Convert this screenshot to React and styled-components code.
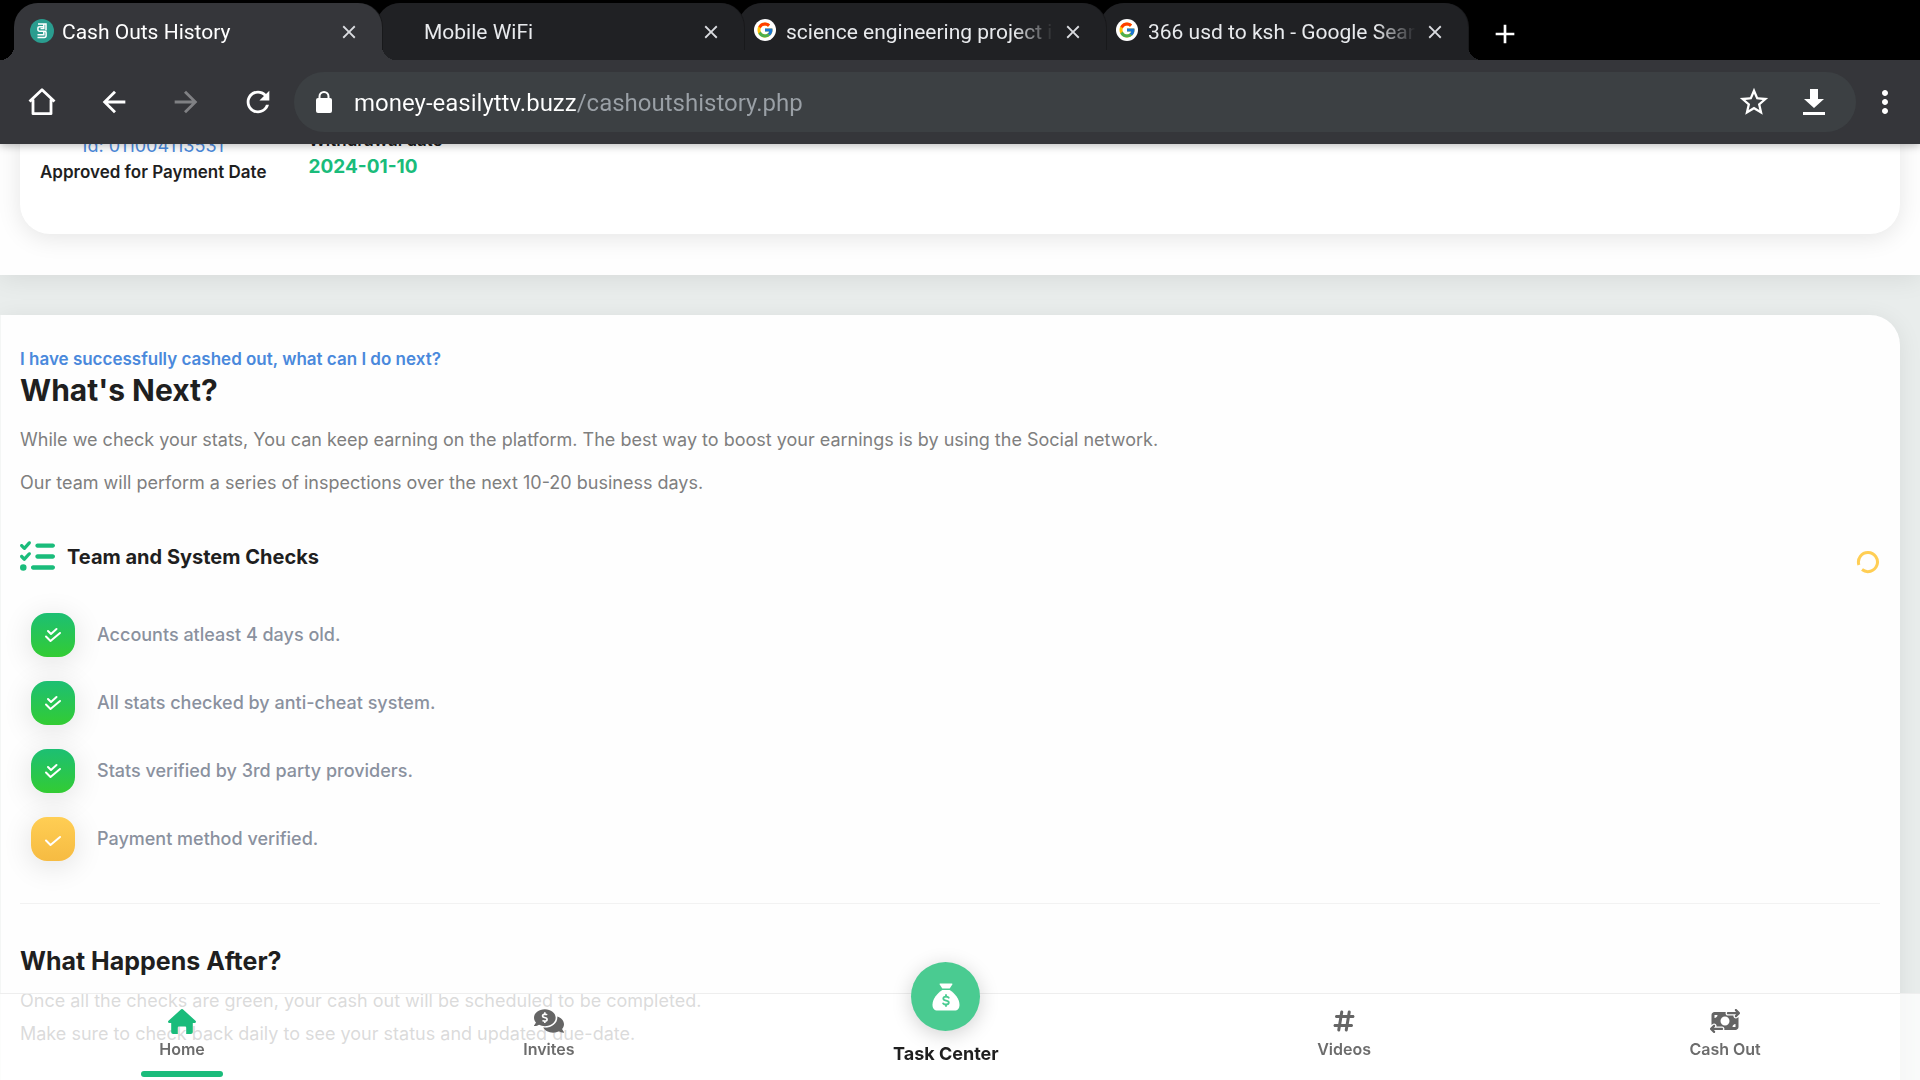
import React, { useState } from 'react'
import styled, { createGlobalStyle } from 'styled-components'
import { FcGoogle } from 'react-icons/fc'
import {
  MdArrowBack,
  MdArrowForward,
  MdRefresh,
  MdStarBorder,
  MdMoreVert,
  MdClose,
  MdAdd,
} from 'react-icons/md'
import { FaCommentsDollar } from 'react-icons/fa'
import { FaHashtag, FaListCheck, FaMoneyBillTransfer } from 'react-icons/fa6'

const tabs = [
  { title: 'Cash Outs History', icon: 'site' },
  { title: 'Mobile WiFi', icon: 'none' },
  { title: 'science engineering project ideas', icon: 'google' },
  { title: '366 usd to ksh - Google Search', icon: 'google' },
]

const checks = [
  { text: 'Accounts atleast 4 days old.', done: true },
  { text: 'All stats checked by anti-cheat system.', done: true },
  { text: 'Stats verified by 3rd party providers.', done: true },
  { text: 'Payment method verified.', done: false },
]

function SiteLogo() {
  return (
    <svg width="24" height="24" viewBox="0 0 24 24" aria-hidden="true">
      <circle cx="12" cy="12" r="12" fill="#2a9d8f" />
      <g fill="none" stroke="#fff" strokeWidth="1.5">
        <path d="M8 5h8v6.500" />
        <path d="M13.800 7.800H9.800c-1.200 0-1.900.6-1.900 1.600v1.200c0 1 .7 1.600 1.900 1.600h4.400c1.200 0 1.900.6 1.900 1.600v3c0 1-.7 1.700-1.900 1.700H7.500" />
        <path d="M13.800 5v4.600h-3.300M13.800 12.500v3.200H7.500" />
      </g>
    </svg>
  )
}

function HomeOutline() {
  return (
    <svg width="28" height="28" viewBox="0 0 28 28" aria-hidden="true">
      <path
        d="M1.500 13.500L14 1.800l12.500 11.700M5 11.500v14.200h18V11.500"
        fill="none"
        stroke="#fff"
        strokeWidth="2.800"
        strokeLinejoin="round"
      />
    </svg>
  )
}

function LockSolid() {
  return (
    <svg width="18" height="22" viewBox="0 0 18 22" aria-hidden="true">
      <path d="M4.500 9V5.500a4.500 4.500 0 0 1 9 0V9" fill="none" stroke="#fff" strokeWidth="2" />
      <rect x="1" y="7" width="16" height="15" rx="2" fill="#fff" />
    </svg>
  )
}

function DownloadIcon() {
  return (
    <svg width="24" height="28" viewBox="0 0 24 28" fill="#fff" aria-hidden="true">
      <path d="M8 1h8v10h6L12 20 2 11h6zM1 24h22v3H1z" />
    </svg>
  )
}

function HomeSolid() {
  return (
    <svg width="28" height="25" viewBox="0 0 28 25" aria-hidden="true">
      <path
        fill="currentColor"
        d="M12.9.5a1.6 1.6 0 0 1 2.2 0l12.4 11.2c1 .9.4 2.3-.9 2.3h-1.8v9c0 1.100-.8 2-1.900 2h-4.700v-6.300c0-.8-.5-1.300-1.300-1.300h-5.800c-.8 0-1.300.5-1.300 1.300V25H5.100c-1.100 0-1.900-.9-1.900-2v-9H1.400C.1 14-.5 12.600.5 11.700z"
      />
    </svg>
  )
}

function MoneyBag() {
  return (
    <svg width="28" height="28" viewBox="0 0 28 28" aria-hidden="true">
      <path fill="#fff" d="M8.300.5h11.400c.6 0 .9.5.6 1L17.700 5.500h-7.400L7.700 1.500c-.3-.5 0-1 .6-1z" />
      <path
        fill="#fff"
        d="M10.300 7h7.400c4.800 2.900 9.800 8.900 9.800 14.700 0 3.800-1.800 5.800-5 5.800h-17c-3.200 0-5-2-5-5.800C.5 15.900 5.500 9.900 10.300 7z"
      />
      <g fill="none" stroke="#4acb91" strokeWidth="1.800" strokeLinecap="round">
        <path d="M14 12v1.500M14 21.500V23" />
        <path d="M16.700 14.700c-.7-.8-1.600-1.100-2.700-1.100-1.600 0-2.700.8-2.700 2 0 3 5.500 1.200 5.500 4 0 1.200-1.200 2-2.800 2-1.200 0-2.200-.4-2.900-1.200" />
      </g>
    </svg>
  )
}

function CheckIcon({ done }) {
  return (
    <svg width="18" height="18" viewBox="0 0 18 18" fill="none" aria-hidden="true">
      <g stroke="#fff" strokeWidth="2" strokeLinecap="round" strokeLinejoin="round">
        <path d="M2 10.500l4.500 4.500L16 7" />
        {done && <path d="M4 5l3 3 5.500-5" />}
      </g>
    </svg>
  )
}

function Spinner() {
  return (
    <svg width="24" height="24" viewBox="0 0 24 24" role="img" aria-label="Checking">
      <path d="M6 19.500A9.500 9.500 0 1 0 2.900 15" fill="none" stroke="#ffce54" strokeWidth="3" />
    </svg>
  )
}

function BrowserBar() {
  const [url, setUrl] = useState('money-easilyttv.buzz/cashoutshistory.php')

  return (
    <StyledBrowser>
      <StyledTabStrip>
        {tabs.map((tab, index) => (
          <StyledTab key={tab.title} $active={index === 0} $level={tabs.length - index}>
            <StyledFavicon>
              {tab.icon === 'site' && <SiteLogo />}
              {tab.icon === 'google' && (
                <StyledGoogle>
                  <FcGoogle size={18} />
                </StyledGoogle>
              )}
            </StyledFavicon>
            <StyledTabTitle>{tab.title}</StyledTabTitle>
            <StyledTabButton aria-label={`Close ${tab.title}`}>
              <MdClose size={22} />
            </StyledTabButton>
          </StyledTab>
        ))}
        <StyledNewTab aria-label="New tab">
          <MdAdd size={32} />
        </StyledNewTab>
      </StyledTabStrip>
      <StyledToolbar>
        <StyledTools>
          <StyledToolButton aria-label="Home">
            <HomeOutline />
          </StyledToolButton>
          <StyledToolButton aria-label="Back">
            <MdArrowBack size={34} />
          </StyledToolButton>
          <StyledToolButton aria-label="Forward" disabled>
            <MdArrowForward size={34} />
          </StyledToolButton>
          <StyledToolButton aria-label="Reload">
            <MdRefresh size={34} />
          </StyledToolButton>
        </StyledTools>
        <StyledOmnibox>
          <LockSolid />
          <StyledUrl
            aria-label="Address"
            value={url}
            spellCheck={false}
            onChange={(event) => setUrl(event.target.value)}
          />
          <StyledToolButton aria-label="Bookmark">
            <MdStarBorder size={34} />
          </StyledToolButton>
          <StyledToolButton aria-label="Downloads">
            <DownloadIcon />
          </StyledToolButton>
        </StyledOmnibox>
        <StyledToolButton aria-label="More">
          <MdMoreVert size={36} />
        </StyledToolButton>
      </StyledToolbar>
    </StyledBrowser>
  )
}

function BottomNav() {
  return (
    <StyledNav>
      <StyledNavItem href="#home" $active>
        <StyledNavIcon>
          <HomeSolid />
        </StyledNavIcon>
        Home
      </StyledNavItem>
      <StyledNavItem href="#invites">
        <StyledNavIcon>
          <FaCommentsDollar size={30} />
        </StyledNavIcon>
        Invites
      </StyledNavItem>
      <StyledTaskItem href="#tasks">
        <StyledTaskCircle>
          <MoneyBag />
        </StyledTaskCircle>
        Task Center
      </StyledTaskItem>
      <StyledNavItem href="#videos">
        <StyledNavIcon>
          <FaHashtag size={24} />
        </StyledNavIcon>
        Videos
      </StyledNavItem>
      <StyledNavItem href="#cashout">
        <StyledNavIcon>
          <FaMoneyBillTransfer size={30} />
        </StyledNavIcon>
        Cash Out
      </StyledNavItem>
    </StyledNav>
  )
}

function App() {
  return (
    <StyledPage>
      <GlobalStyle />
      <BrowserBar />
      <StyledViewport>
        <StyledScrolled>
          <StyledHistory>
            <StyledCard>
              <StyledIdColumn>
                <StyledId>Id: 011004113531</StyledId>
                <StyledCardLabel>Approved for Payment Date</StyledCardLabel>
              </StyledIdColumn>
              <div>
                <StyledCardLabel>Withdrawal date</StyledCardLabel>
                <StyledDate>2024-01-10</StyledDate>
              </div>
            </StyledCard>
          </StyledHistory>
          <StyledPanel>
            <StyledSubtitle>I have successfully cashed out, what can I do next?</StyledSubtitle>
            <StyledTitle>What's Next?</StyledTitle>
            <StyledText $spaced>
              While we check your stats, You can keep earning on the platform. The best way to boost
              your earnings is by using the Social network.
            </StyledText>
            <StyledText $spaced>
              Our team will perform a series of inspections over the next 10-20 business days.
            </StyledText>
            <StyledSectionRow>
              <FaListCheck size={35} color="#1abc7b" />
              <StyledSectionTitle>Team and System Checks</StyledSectionTitle>
              <StyledStatus>
                <Spinner />
              </StyledStatus>
            </StyledSectionRow>
            <StyledList>
              {checks.map((check) => (
                <StyledListItem key={check.text}>
                  <StyledBadge $done={check.done}>
                    <CheckIcon done={check.done} />
                  </StyledBadge>
                  {check.text}
                </StyledListItem>
              ))}
            </StyledList>
            <StyledDivider />
            <StyledAfterTitle>What Happens After?</StyledAfterTitle>
            <StyledText>Once all the checks are green, your cash out will be scheduled to be completed.</StyledText>
            <StyledText>Make sure to check back daily to see your status and updated due-date.</StyledText>
          </StyledPanel>
        </StyledScrolled>
      </StyledViewport>
      <BottomNav />
    </StyledPage>
  )
}

const GlobalStyle = createGlobalStyle`
  * {
    box-sizing: border-box;
  }
  body {
    margin: 0;
    font-family: Inter, "Liberation Sans", sans-serif;
    background: #e9edec;
  }
  h1, h2, h3, p, ul {
    margin: 0;
    padding: 0;
  }
  button {
    border: 0;
    padding: 0;
    background: none;
    color: inherit;
    cursor: pointer;
  }
  svg {
    display: block;
    flex: none;
  }
`
const StyledPage = styled.div`
  display: flex;
  flex-direction: column;
  height: 100vh;
  overflow: hidden;
`
const StyledBrowser = styled.header`
  position: relative;
  z-index: 2;
  font-family: Roboto, "Liberation Sans", sans-serif;
  color: #fff;
  background: #35363a;
  box-shadow: 0 2px 8px rgba(0, 0, 0, 0.25);
`
const StyledTabStrip = styled.div`
  display: flex;
  height: 60px;
  padding: 3px 14px 0 20px;
  background: #000;
`
const StyledTab = styled.div`
  position: relative;
  z-index: ${(props) => props.$level};
  display: flex;
  align-items: center;
  gap: 8px;
  flex: 0 1 368px;
  min-width: 0;
  margin-left: -6px;
  padding: 0 22px 0 16px;
  border-radius: 24px 24px 0 0;
  color: ${(props) => (props.$active ? '#fff' : '#e8eaed')};
  background: ${(props) => (props.$active ? '#35363a' : '#202124')};
  box-shadow: 1px 0 0 #18191b;

  &::before,
  &::after {
    content: '';
    position: absolute;
    bottom: 0;
    width: 14px;
    height: 14px;
  }
  &::before {
    left: -14px;
    background: radial-gradient(circle at 0 0, transparent 14px, ${(props) => (props.$active ? '#35363a' : '#202124')} 14px);
  }
  &::after {
    right: -14px;
    background: radial-gradient(circle at 100% 0, transparent 14px, ${(props) => (props.$active ? '#35363a' : '#202124')} 14px);
  }
`
const StyledFavicon = styled.span`
  width: 24px;
  height: 24px;
  margin-bottom: 2px;
`
const StyledGoogle = styled.span`
  display: flex;
  align-items: center;
  justify-content: center;
  width: 22px;
  height: 22px;
  border-radius: 50%;
  background: #fff;
`
const StyledTabTitle = styled.span`
  flex: 1;
  overflow: hidden;
  white-space: nowrap;
  font-size: 21px;
  line-height: 28px;
  mask-image: linear-gradient(90deg, #000 calc(100% - 40px), transparent);
`
const StyledTabButton = styled.button`
  color: #dadce0 !important;
`
const StyledNewTab = styled.button`
  margin-left: 21px;
  padding: 4px 0 0 !important;
`
const StyledToolbar = styled.div`
  display: flex;
  align-items: center;
  gap: 12px;
  height: 84px;
  padding: 0 18px 0 25px;
`
const StyledTools = styled.div`
  display: flex;
  gap: 38px;
  margin-right: 7px;
`
const StyledToolButton = styled.button`
  display: flex;
  align-items: center;
  justify-content: center;
  width: 34px;
  height: 34px;

  &:disabled {
    color: #808184;
  }
`
const StyledOmnibox = styled.div`
  display: flex;
  align-items: center;
  gap: 21px;
  flex: 1;
  height: 60px;
  padding: 0 25px 0 21px;
  border-radius: 30px;
  background: #3c4043;

  ${StyledToolButton} + ${StyledToolButton} {
    margin-left: 5px;
  }
`
const StyledUrl = styled.input`
  flex: 1;
  min-width: 0;
  border: 0;
  padding: 2px 0 0;
  outline: 0;
  font-family: inherit;
  font-size: 24px;
  line-height: 32px;
  color: transparent;
  background: linear-gradient(90deg, #fff 223px, #9aa0a6 223px);
  background-clip: text;
`
const StyledViewport = styled.main`
  flex: 1;
  min-height: 0;
  overflow: hidden;
`
/* scrolled part of the page, its top is under the browser bar */
const StyledScrolled = styled.div`
  margin-top: -60px;
`
const StyledHistory = styled.section`
  margin-bottom: 40px;
  padding: 0 20px 41px;
  background: #fefefe;
  box-shadow: 0 4px 24px rgba(0, 0, 0, 0.08);
`
const StyledCard = styled.div`
  display: flex;
  gap: 42px;
  padding: 43px 20px 49px;
  border-radius: 30px;
  background: #fff;
  box-shadow: 0 4px 24px rgba(0, 0, 0, 0.1);
`
const StyledIdColumn = styled.div`
  padding-top: 6px;
  text-align: center;
`
const StyledId = styled.p`
  font-size: 18px;
  line-height: 26px;
  color: #4a89dc;
`
const StyledCardLabel = styled.h3`
  font-size: 17px;
  font-weight: 600;
  line-height: 26px;
  color: #1f1f1f;
`
const StyledDate = styled.p`
  font-size: 19px;
  font-weight: 700;
  line-height: 28px;
  color: #1abc7b;
`
const StyledPanel = styled.section`
  margin-right: 20px;
  padding: 31px 20px 80px;
  border-radius: 0 30px 0 0;
  background: #fefefe;
  box-shadow: 0 4px 24px rgba(0, 0, 0, 0.08), inset 1px 0 0 #f4f6f5;
`
const StyledSubtitle = styled.p`
  font-size: 17px;
  font-weight: 600;
  line-height: 26px;
  color: #4a89dc;
`
const StyledTitle = styled.h1`
  margin-bottom: 15px;
  font-size: 30px;
  font-weight: 700;
  line-height: 36px;
  color: #1f1f1f;
`
const StyledText = styled.p`
  margin-bottom: ${(props) => (props.$spaced ? '10px' : '0')};
  font-size: 18px;
  line-height: 33px;
  color: #7f7f7f;
`
const StyledSectionRow = styled.div`
  display: flex;
  align-items: center;
  gap: 12px;
  margin-top: 40px;
`
const StyledSectionTitle = styled.h2`
  flex: 1;
  font-size: 20px;
  font-weight: 700;
  line-height: 30px;
  color: #1f1f1f;
`
const StyledStatus = styled.span`
  padding-top: 10px;
`
const StyledList = styled.ul`
  display: flex;
  flex-direction: column;
  gap: 24px;
  margin: 39px 0 42px;
  padding-left: 11px;
  list-style: none;
`
const StyledListItem = styled.li`
  display: flex;
  align-items: center;
  gap: 22px;
  font-size: 18px;
  font-weight: 500;
  line-height: 26px;
  color: #8a919e;
`
const StyledBadge = styled.span`
  display: flex;
  align-items: center;
  justify-content: center;
  width: 44px;
  height: 44px;
  border-radius: 16px;
  background: ${(props) =>
    props.$done ? 'linear-gradient(#1dbf73, #33cc33)' : 'linear-gradient(#ffce54, #f6bb42)'};
  box-shadow: 0 5px 30px rgba(0, 0, 0, 0.12);
`
const StyledDivider = styled.hr`
  margin: 0 0 40px;
  border: 0;
  border-top: 1px solid #f2f2f2;
`
const StyledAfterTitle = styled.h2`
  margin-bottom: 6px;
  font-size: 25px;
  font-weight: 700;
  line-height: 34px;
  color: #1f1f1f;
`
const StyledNav = styled.nav`
  position: fixed;
  left: 0;
  right: 0;
  bottom: 0;
  z-index: 1;
  display: flex;
  height: 87px;
  border-top: 1px solid #eeeeee;
  background: rgba(255, 255, 255, 0.72);
`
const StyledNavItem = styled.a`
  position: relative;
  display: flex;
  flex-direction: column;
  align-items: center;
  flex: 1 1 auto;
  padding-top: 14px;
  font-size: 16px;
  font-weight: 600;
  line-height: 22px;
  color: #6c6c6c;
  text-decoration: none;

  svg {
    color: ${(props) => (props.$active ? '#1abc7b' : '#656565')};
  }
  &::after {
    content: '';
    display: ${(props) => (props.$active ? 'block' : 'none')};
    position: absolute;
    bottom: 3px;
    width: 82px;
    height: 6px;
    border-radius: 3px;
    background: #1abc7b;
  }
`
const StyledNavIcon = styled.span`
  display: flex;
  align-items: center;
  height: 26px;
  margin-bottom: 4px;
`
const StyledTaskItem = styled(StyledNavItem)`
  padding: 0;
  font-size: 18px;
  font-weight: 700;
  line-height: 26px;
  color: #1f1f1f;
`
const StyledTaskCircle = styled.span`
  display: flex;
  align-items: center;
  justify-content: center;
  width: 69px;
  height: 69px;
  margin: -32px 0 10px;
  border-radius: 50%;
  background: #4acb91;
  box-shadow: 0 4px 20px rgba(0, 0, 0, 0.18);
`

export default App
